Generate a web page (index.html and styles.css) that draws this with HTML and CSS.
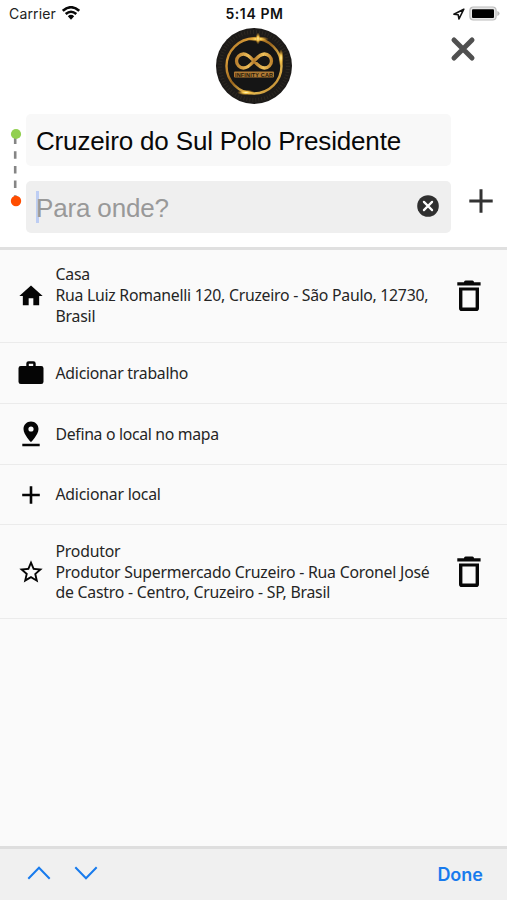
FILE: index.html
```html
<!DOCTYPE html>
<html lang="pt-BR">
<head>
<meta charset="utf-8">
<meta name="viewport" content="width=device-width, initial-scale=1">
<title>Para onde?</title>
<link rel="stylesheet" href="styles.css">
</head>
<body>
<svg class="defs" width="0" height="0" aria-hidden="true">
  <symbol id="trash" viewBox="0 0 24 32">
    <path d="M7 2.2Q7 .6 8.6.6h6.8q1.6 0 1.6 1.6h6.6v3.2H.3V2.2z"/>
    <path fill-rule="evenodd" d="M2 7.6h20v20.6q0 2.8-2.8 2.8H4.8Q2 31 2 28.200zM5.400 10.600v17h13.200v-17z"/>
  </symbol>
</svg>
<header class="top">
  <div class="status">
    <div class="carrier"><span>Carrier</span>
      <svg width="18" height="14" viewBox="0 0 18 14" fill="none" stroke="#080808" stroke-width="2.600"><path d="M.8 4.800Q9-2.300 17.200 4.800M3.700 8Q9 3.500 14.300 8"/><path d="M5.800 10.300Q9 7.400 12.200 10.300L9 13.700z" fill="#080808" stroke="none"/></svg>
    </div>
    <div class="time">5:14 PM</div>
    <div class="power">
      <svg width="12" height="12" viewBox="0 0 12 12" fill="none" stroke="#111" stroke-width="1.600" stroke-linejoin="round"><path d="M10.800 1.200L.9 6.200l4.300.6.800 4.200z"/></svg>
      <svg width="31" height="15" viewBox="0 0 31 15"><rect x=".9" y="1" width="26.200" height="13" rx="3.500" fill="#e7e7e7" stroke="#bbb" stroke-width="1.200"/><rect x="3" y="3.200" width="22" height="8.900" rx="1" fill="#000"/><path d="M28.300 5v5q2.300-.8 2.300-2.500T28.300 5" fill="#bbb"/></svg>
    </div>
  </div>
  <div class="brand">
    <svg class="logo" width="78" height="78" viewBox="0 0 78 78">
      <defs>
        <linearGradient id="gold" x1="0" y1="0" x2="1" y2="1"><stop offset="0" stop-color="#8b5a17"/><stop offset=".2" stop-color="#d89b38"/><stop offset=".45" stop-color="#9a651c"/><stop offset=".7" stop-color="#efc65a"/><stop offset="1" stop-color="#a86d1c"/></linearGradient>
        <linearGradient id="knot" gradientUnits="userSpaceOnUse" x1="20" y1="0" x2="58" y2="0"><stop offset="0" stop-color="#b57b2c"/><stop offset=".35" stop-color="#edbd58"/><stop offset=".5" stop-color="#b57a2a"/><stop offset=".75" stop-color="#efc15b"/><stop offset="1" stop-color="#b87c28"/></linearGradient>
        <radialGradient id="spark"><stop offset="0" stop-color="#fff6bd"/><stop offset=".35" stop-color="#f7ca50"/><stop offset="1" stop-color="#d78a19" stop-opacity="0"/></radialGradient>
      </defs>
      <circle cx="39" cy="39" r="38" fill="#1d1b19"/>
      <circle cx="39" cy="39" r="34" fill="none" stroke="#2c2822" stroke-width="4" stroke-dasharray="1 2"/>
      <circle cx="39" cy="39" r="27.500" fill="#151515" stroke="url(#gold)" stroke-width="2.400"/>
      <path d="M39 34C34 28.500 31.500 27 28.500 27a7 7 0 0 0 0 14C33 41 36 37.500 39 34S45 27 49.500 27a7 7 0 0 1 0 14C46.500 41 44 39.500 39 34z" fill="none" stroke="url(#knot)" stroke-width="3.300"/>
      <rect x="19" y="44.500" width="40" height="6" rx="1" fill="#b07a34"/>
      <text x="39" y="49.600" class="logo-text" text-anchor="middle" textLength="38">INFINITY CAR</text>
      <ellipse cx="43" cy="12" rx="11" ry="2.800" fill="url(#spark)"/><ellipse cx="43" cy="11.500" rx="2.500" ry="6" fill="url(#spark)"/>
      <ellipse cx="31" cy="65.500" rx="9" ry="2.800" fill="url(#spark)"/><ellipse cx="66" cy="31" rx="2.700" ry="9" fill="url(#spark)"/>
    </svg>
    <svg class="close" width="26" height="26" viewBox="0 0 26 26" stroke="#505050" stroke-width="5" stroke-linecap="round"><path d="M4 4l18 18M22 4L4 22"/></svg>
  </div>
  <div class="route">
    <svg class="track" width="12" height="82" viewBox="0 0 12 82"><path d="M5.200 8v66" stroke="#858585" stroke-width="2.600" stroke-dasharray="7.500 7.200" stroke-dashoffset="-1.500"/><circle cx="6" cy="7" r="5.100" fill="#92d050"/><circle cx="6" cy="74" r="5.200" fill="#ff4d00"/></svg>
    <div class="fields">
      <div class="field origin"><span>Cruzeiro do Sul Polo Presidente</span></div>
      <div class="field destination"><i class="caret"></i><span>Para onde?</span>
        <svg class="clear" width="22" height="22" viewBox="0 0 22 22"><circle cx="11" cy="11" r="10.800" fill="#303030"/><path d="M6.900 6.900l8.200 8.200M15.100 6.900l-8.200 8.200" stroke="#fff" stroke-width="2.200" stroke-linecap="round"/></svg>
      </div>
    </div>
    <svg class="add" width="24" height="24" viewBox="0 0 24 24" stroke="#333" stroke-width="3"><path d="M12 .3v23.400M.3 12h23.400"/></svg>
  </div>
</header>
<main class="places">
  <section class="place tall first">
    <svg class="icon wide" width="28" height="28" viewBox="0 0 24 24"><path d="M10 20v-6h4v6h5v-8h3L12 3 2 12h3v8z"/></svg>
    <div class="label"><span>Casa</span><span class="casa-street">Rua Luiz Romanelli 120, Cruzeiro - São Paulo, 12730,</span><span>Brasil</span></div>
    <svg class="trash" width="24" height="32"><use href="#trash"/></svg>
  </section>
  <section class="place">
    <svg class="icon" width="26" height="26" viewBox="0 0 26 26"><path fill-rule="evenodd" d="M8.300 6V3.600Q8.300 1.300 10.600 1.300h4.800q2.300 0 2.300 2.300V6h5.500q2.300 0 2.300 2.300v13.400q0 2.300-2.300 2.300H2.800Q.5 24 .5 21.700V8.300Q.5 6 2.800 6zM10.800 3.700V6h4.400V3.700z"/></svg>
    <div class="label"><span class="work">Adicionar trabalho</span></div>
  </section>
  <section class="place">
    <svg class="icon" width="26" height="26" viewBox="0 0 26 26"><path fill-rule="evenodd" d="M13 .5c-4.300 0-7.500 3.300-7.500 7.500C5.500 13.500 13 21.200 13 21.200S20.500 13.500 20.500 8c0-4.200-3.200-7.500-7.500-7.500zm0 4.900a2.600 2.600 0 1 1 0 5.200 2.600 2.600 0 0 1 0-5.200zM4.300 22.800h17.400v2.500H4.300z"/></svg>
    <div class="label"><span class="map">Defina o local no mapa</span></div>
  </section>
  <section class="place short">
    <svg class="icon" width="26" height="26" viewBox="0 0 26 26"><path d="M11.700 4.200h2.600v7.500h7.500v2.600h-7.500v7.500h-2.600v-7.500H4.200v-2.600h7.500z"/></svg>
    <div class="label"><span>Adicionar local</span></div>
  </section>
  <section class="place tall last">
    <svg class="icon wide" width="28" height="28" viewBox="0 0 24 24"><path d="M22 9.240l-7.190-.62L12 2 9.190 8.630 2 9.240l5.460 4.730L5.820 21 12 17.270 18.180 21l-1.630-7.030zM12 15.400l-3.760 2.270 1-4.280-3.320-2.880 4.380-.38L12 6.100l1.710 4.040 4.380.38-3.320 2.880 1 4.280z"/></svg>
    <div class="label"><span>Produtor</span><span>Produtor Supermercado Cruzeiro - Rua Coronel José</span><span>de Castro - Centro, Cruzeiro - SP, Brasil</span></div>
    <svg class="trash" width="24" height="32"><use href="#trash"/></svg>
  </section>
</main>
<footer class="accessory">
  <div class="arrows"><svg width="24" height="14" viewBox="0 0 24 14"><path d="M1.300 12.800L12 1.800l10.700 11"/></svg><svg width="24" height="14" viewBox="0 0 24 14"><path d="M1.300 1.200L12 12.200l10.700-11"/></svg></div>
  <span class="done">Done</span>
</footer>
</body>
</html>
```
FILE: styles.css
```css
* { box-sizing: border-box; }
body { margin: 0; height: 900px; display: flex; flex-direction: column; background: #fafafa; overflow: hidden; }
svg { display: block; flex: none; }
.defs { position: absolute; }
.top { height: 250px; flex: none; background: #fff; border-bottom: 3px solid #e0e0e0; }
.status { height: 27px; display: grid; grid-template-columns: 1fr auto 1fr; align-items: center; padding: 0 7px 0 9px; font: 14px/27px Inter, sans-serif; color: #222; }
.carrier { display: flex; align-items: center; gap: 6px; }
.carrier span { letter-spacing: .15px; }
.carrier svg { margin-top: -1px; }
.time { font-weight: 600; color: #111; letter-spacing: .6px; }
.power { display: flex; justify-content: flex-end; align-items: center; gap: 4px; }
.brand { height: 87px; display: grid; grid-template-columns: 1fr 78px 1fr; }
.logo { grid-column: 2; }
.logo-text { font: bold 5.500px "Liberation Sans", sans-serif; fill: #24180b; }
.close { justify-self: end; margin: 9px 31px 0 0; }
.route { display: flex; padding-left: 10px; }
.track { margin-top: 13px; }
.fields { width: 425px; margin-left: 4px; display: grid; gap: 15px; }
.field { height: 52px; border-radius: 5px; display: flex; align-items: center; padding: 2px 12px 0 10px; font: 26px "Liberation Sans", sans-serif; letter-spacing: -.16px; white-space: nowrap; }
.origin { background: #f8f8f8; color: #080808; }
.destination { background: #efefef; color: #999; }
.caret { width: 3px; height: 32px; margin: -2px -3px 0 0; background: #bdcdf3; }
.clear { margin-left: auto; margin-top: -4px; }
.add { margin: 75px 0 0 18px; }
.places { flex: 1; font: 15.800px/20.800px "Noto Sans", sans-serif; letter-spacing: -.22px; color: #252525; }
.place { height: 61px; border-bottom: 1px solid #ebebeb; display: grid; grid-template-columns: 37.500px 1fr 24px; align-items: center; padding: 0 26px 0 18px; }
.tall { height: 93px; }
.short { height: 60px; }
.last { height: 94px; }
.icon { fill: #050505; }
.wide { margin-left: -1px; }
.label { display: flex; flex-direction: column; align-items: flex-start; white-space: nowrap; }
.first .label { margin-top: -1px; }
.last .label { margin-top: 1px; }
.casa-street { letter-spacing: -.26px; }
.map { letter-spacing: -.32px; }
.work { letter-spacing: -.25px; }
.trash { fill: #080808; }
.accessory { height: 54px; flex: none; border-top: 3px solid #dedede; background: #f0f0f0; display: flex; align-items: center; justify-content: space-between; padding: 0 24px 0 27px; }
.arrows { display: flex; gap: 23px; margin-top: -3px; fill: none; stroke: #187bed; stroke-width: 2; }
.done { font: 600 18px Inter, sans-serif; color: #187bed; }
```
